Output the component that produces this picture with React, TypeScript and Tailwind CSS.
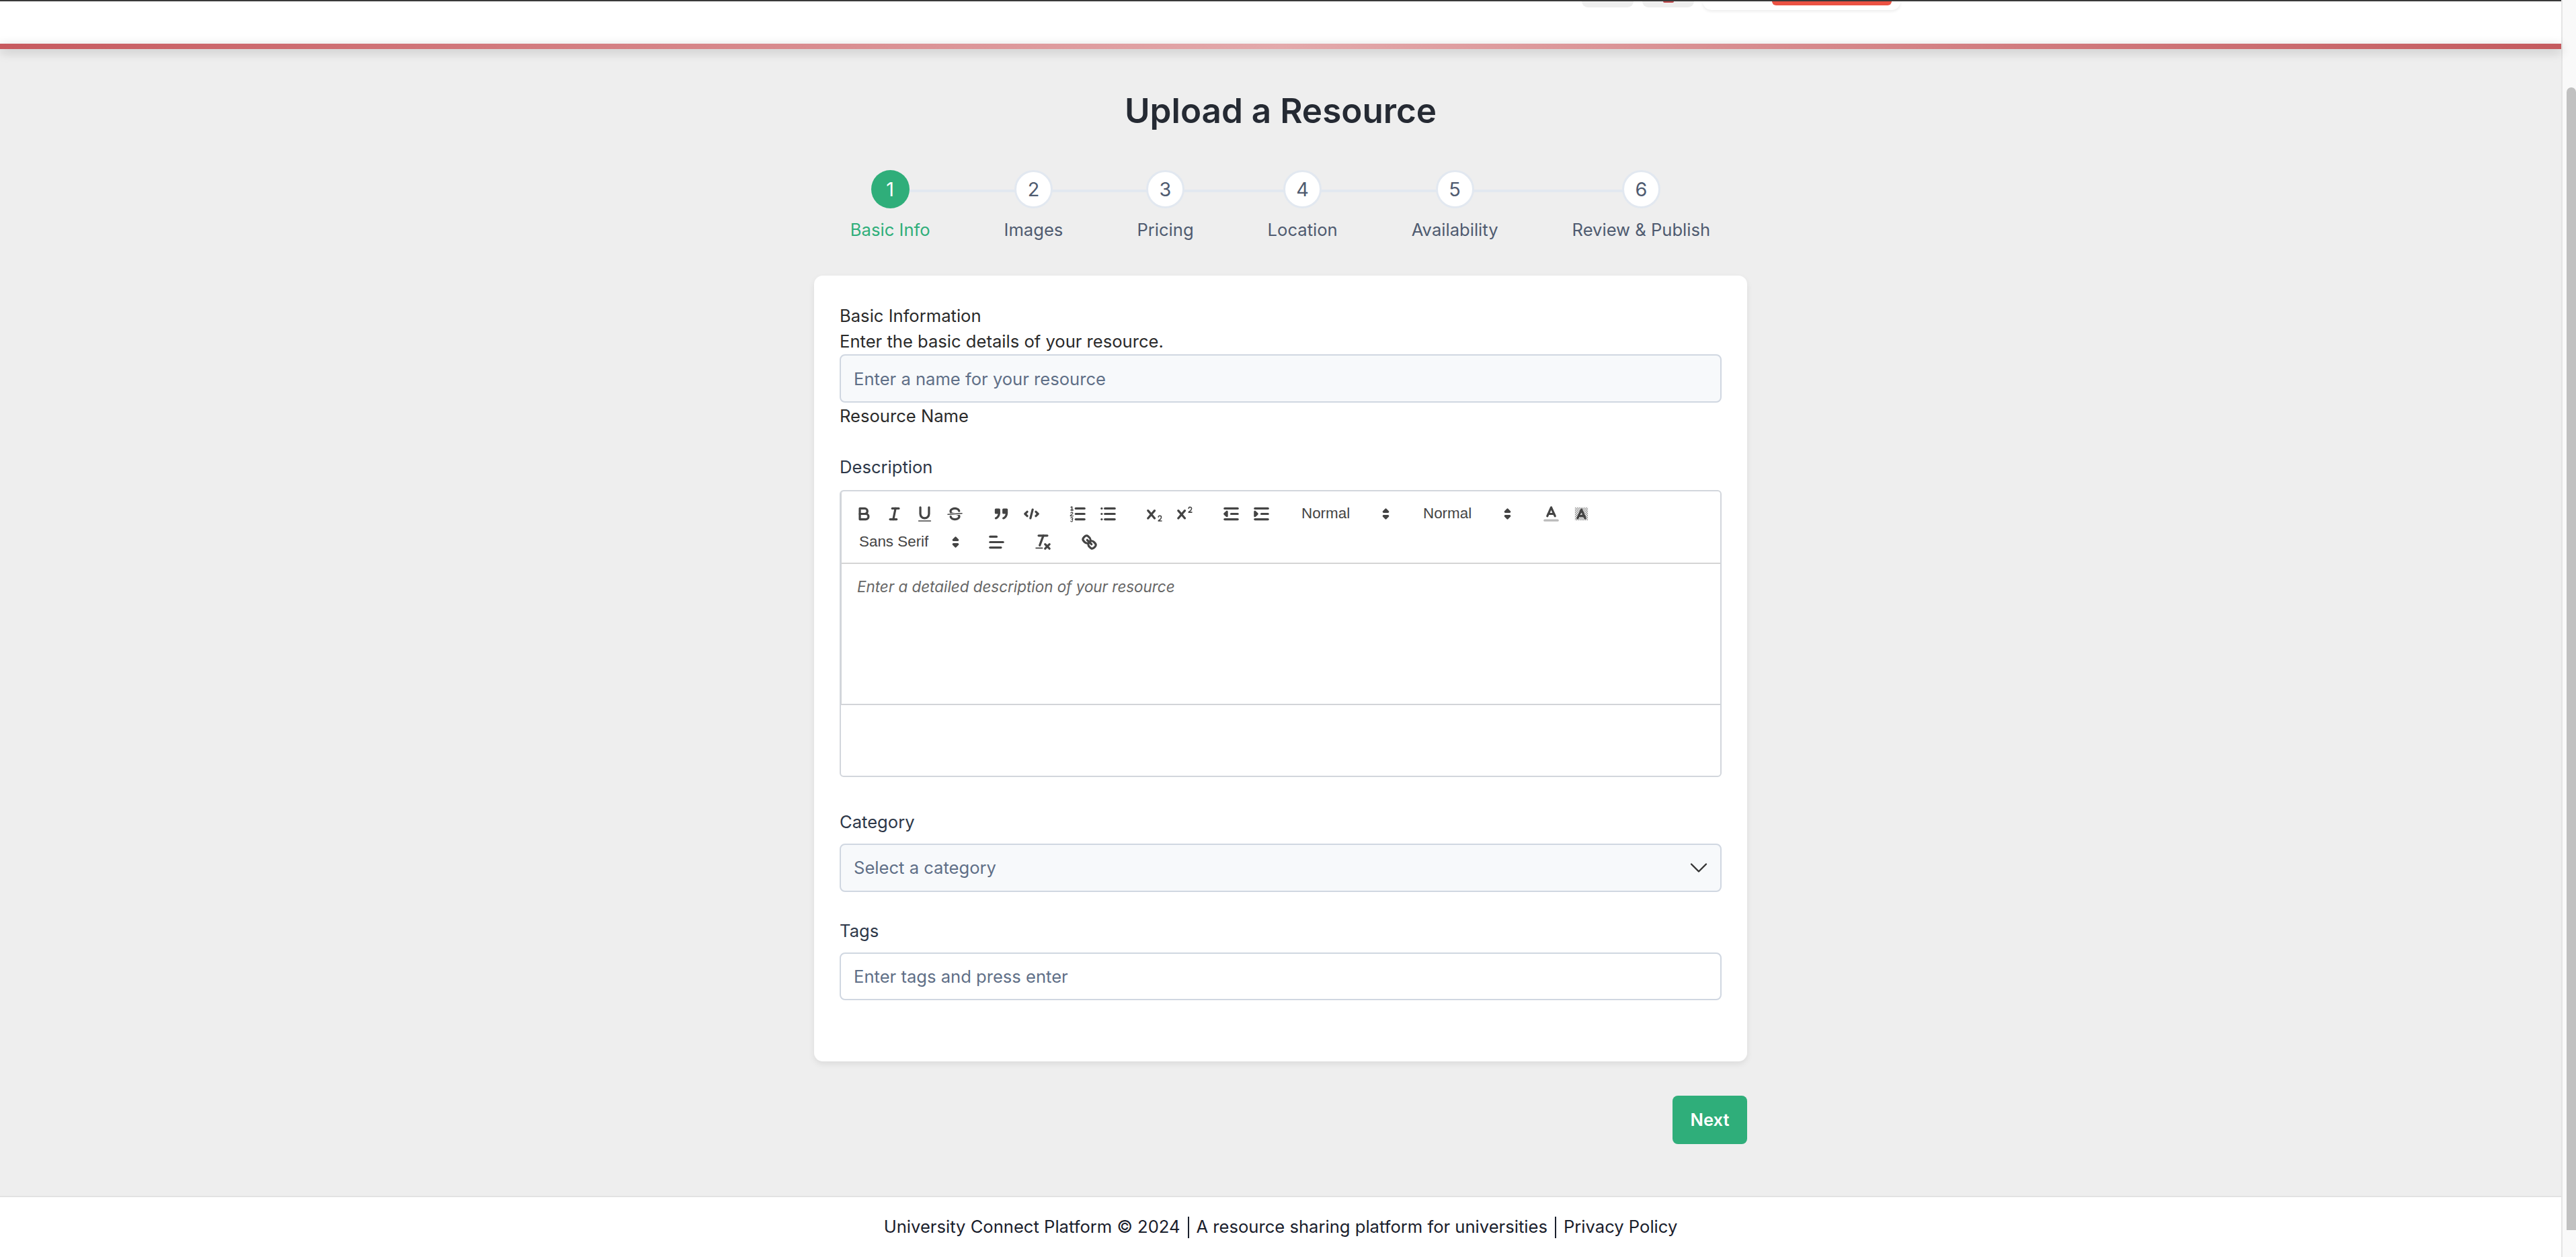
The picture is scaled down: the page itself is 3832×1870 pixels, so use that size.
import { ChevronDown } from "lucide-react";
import type { ReactNode } from "react";

const steps = ["Basic Info", "Images", "Pricing", "Location", "Availability", "Review & Publish"];

function Ico({ children }: { children: ReactNode }) {
  return (
    <span className="flex h-[38px] w-[45px] shrink-0 items-center justify-center">
      <svg
        viewBox="0 0 18 18"
        className="h-[29px] w-[29px] fill-none stroke-[#444] [stroke-linecap:round] [stroke-linejoin:round] [stroke-width:2]"
      >
        {children}
      </svg>
    </span>
  );
}

const fill = "fill-[#444] stroke-none";
const thin = "[stroke-width:1]";

function Arrows() {
  return (
    <svg viewBox="0 0 18 18" className="h-[29px] w-[29px] shrink-0 fill-[#444] stroke-[#444] [stroke-linejoin:round] [stroke-width:2]">
      <polygon points="7 11 9 13 11 11 7 11" />
      <polygon points="7 7 9 5 11 7 7 7" />
    </svg>
  );
}

function Picker({ label, width }: { label: string; width: string }) {
  return (
    <span className={`flex h-[38px] shrink-0 items-center justify-between pl-[13px] text-[22.4px] font-medium text-[#444] [font-family:'Liberation_Sans',sans-serif] ${width}`}>
      {label}
      <Arrows />
    </span>
  );
}

function Group({ children }: { children: ReactNode }) {
  return <span className="mr-[24px] flex h-[38px] items-center">{children}</span>;
}

function Toolbar() {
  return (
    <div className="flex h-[108px] flex-wrap content-start border-b-[2px] border-[#d4d4d4] pt-[14px] pr-[13px] pl-[11px] [row-gap:4px]">
      <Group>
        <Ico>
          <path d="M5,4H9.5A2.5,2.5,0,0,1,12,6.5v0A2.5,2.5,0,0,1,9.5,9H5A0,0,0,0,1,5,9V4A0,0,0,0,1,5,4Z" />
          <path d="M5,9h5.5A2.5,2.5,0,0,1,13,11.5v0A2.5,2.5,0,0,1,10.5,14H5a0,0,0,0,1,0,0V9A0,0,0,0,1,5,9Z" />
        </Ico>
        <Ico>
          <line x1="7" x2="13" y1="4" y2="4" />
          <line x1="5" x2="11" y1="14" y2="14" />
          <line x1="8" x2="10" y1="14" y2="4" />
        </Ico>
        <Ico>
          <path d="M5,3V9a4.012,4.012,0,0,0,4,4H9a4.012,4.012,0,0,0,4-4V3" />
          <rect className={fill} height="1" rx="0.5" ry="0.5" width="12" x="3" y="15" />
        </Ico>
        <Ico>
          <line className={thin} x1="15.5" x2="2.5" y1="8.5" y2="9.5" />
          <path className={fill} d="M9.007,8C6.542,7.791,6,7.519,6,6.5,6,5.792,7.283,5,9,5c1.571,0,2.765.679,2.913,1.549a1,1,0,0,0,1.972-.328C13.57,4.5,11.5,3,9,3,6.3,3,4,4.578,4,6.5a3.232,3.232,0,0,0,.55,1.858Z" />
          <path className={fill} d="M8.984,10C11.457,10.208,12,10.479,12,11.5c0,.708-1.283,1.5-3,1.5-1.571,0-2.765-.679-2.913-1.549a1,1,0,1,0-1.972.328C4.43,13.5,6.5,15,9,15c2.7,0,5-1.578,5-3.5a3.234,3.234,0,0,0-.4-1.5Z" />
        </Ico>
      </Group>
      <Group>
        <Ico>
          <rect className="fill-[#444]" height="3" width="3" x="4" y="5" />
          <rect className="fill-[#444]" height="3" width="3" x="11" y="5" />
          <path d="M7,8c0,4.031-3,5-3,5" />
          <path d="M14,8c0,4.031-3,5-3,5" />
        </Ico>
        <Ico>
          <polyline points="5 7 3 9 5 11" />
          <polyline points="13 7 15 9 13 11" />
          <line x1="10" x2="8" y1="5" y2="13" />
        </Ico>
      </Group>
      <Group>
        <Ico>
          <line x1="7" x2="15" y1="4" y2="4" />
          <line x1="7" x2="15" y1="9" y2="9" />
          <line x1="7" x2="15" y1="14" y2="14" />
          <line className={thin} x1="2.5" x2="4.5" y1="5.5" y2="5.5" />
          <path className={fill} d="M3.5,6A0.5,0.5,0,0,1,3,5.5V3.085l-0.276.138A0.5,0.5,0,0,1,2.053,3c-0.124-.247-0.023-0.324.224-0.447l1-.5A0.5,0.5,0,0,1,4,2.5v3A0.5,0.5,0,0,1,3.5,6Z" />
          <path className={fill} d="M4.5,10.5H2.75c0.2-.5,1.9-1.1,1.9-2.3A1.3,1.3,0,0,0,3.4,7,1.3,1.3,0,0,0,2.1,8.1a0.4,0.4,0,0,0,.8.1,0.5,0.5,0,0,1,.5-.4,0.5,0.5,0,0,1,.5.5c0,.8-2.3,1.5-2.3,2.6a0.5,0.5,0,0,0,.5.5H4.5a0.5,0.5,0,0,0,0-1Z" />
          <path className={fill} d="M4.1,14.3a1.2,1.2,0,0,0,.5-1,1.3,1.3,0,0,0-1.3-1.3,1.3,1.3,0,0,0-1.2,.8,0.4,0.4,0,0,0,.7,.3,0.5,0.5,0,0,1,.5-.3,0.5,0.5,0,0,1,0,1,0.4,0.4,0,0,0,0,.8,0.6,0.6,0,0,1,0,1.2,0.6,0.6,0,0,1-.6-.3,0.4,0.4,0,0,0-.7,.4,1.4,1.4,0,0,0,1.3,.7,1.4,1.4,0,0,0,.8-2.3Z" />
        </Ico>
        <Ico>
          <line x1="6" x2="15" y1="4" y2="4" />
          <line x1="6" x2="15" y1="9" y2="9" />
          <line x1="6" x2="15" y1="14" y2="14" />
          <line x1="3" x2="3" y1="4" y2="4" />
          <line x1="3" x2="3" y1="9" y2="9" />
          <line x1="3" x2="3" y1="14" y2="14" />
        </Ico>
      </Group>
      <Group>
        <Ico>
          <path className={fill} d="M15.5,15H13.861a3.858,3.858,0,0,0,1.914-2.975,1.8,1.8,0,0,0-1.6-1.751A1.921,1.921,0,0,0,12.021,11.7a0.50013,0.50013,0,1,0,.957.291h0a0.914,0.914,0,0,1,1.053-.725,0.81,0.81,0,0,1,.744.762c0,1.076-1.16971,1.86982-1.93971,2.43082A1.45639,1.45639,0,0,0,12,15.5a0.5,0.5,0,0,0,.5.5h3A0.5,0.5,0,0,0,15.5,15Z" />
          <path className={fill} d="M9.65,5.241a1,1,0,0,0-1.409.108L6,7.964,3.759,5.349A1,1,0,0,0,2.192,6.59178Q2.21541,6.6213,2.241,6.649L4.684,9.5,2.241,12.35A1,1,0,0,0,3.71,13.70722q0.02557-.02768.049-0.05722L6,11.036,8.241,13.65a1,1,0,1,0,1.567-1.24277Q9.78459,12.3777,9.759,12.35L7.316,9.5,9.759,6.651A1,1,0,0,0,9.65,5.241Z" />
        </Ico>
        <Ico>
          <path className={fill} d="M15.5,7H13.861a4.015,4.015,0,0,0,1.914-2.975,1.8,1.8,0,0,0-1.6-1.751A1.922,1.922,0,0,0,12.021,3.7a0.5,0.5,0,1,0,.957.291,0.917,0.917,0,0,1,1.053-.725,0.81,0.81,0,0,1,.744.762c0,1.077-1.164,1.925-1.934,2.486A1.423,1.423,0,0,0,12,7.5a0.5,0.5,0,0,0,.5.5h3A0.5,0.5,0,0,0,15.5,7Z" />
          <path className={fill} d="M9.651,5.241a1,1,0,0,0-1.41.108L6,7.964,3.759,5.349a1,1,0,1,0-1.519,1.3L4.683,9.5,2.241,12.35a1,1,0,1,0,1.519,1.3L6,11.036,8.241,13.65a1,1,0,0,0,1.519-1.3L7.317,9.5,9.759,6.651A1,1,0,0,0,9.651,5.241Z" />
        </Ico>
      </Group>
      <Group>
        <Ico>
          <line x1="3" x2="15" y1="14" y2="14" />
          <line x1="3" x2="15" y1="4" y2="4" />
          <line x1="9" x2="15" y1="9" y2="9" />
          <polyline className="fill-[#444]" points="5 7 5 11 3 9 5 7" />
        </Ico>
        <Ico>
          <line x1="3" x2="15" y1="14" y2="14" />
          <line x1="3" x2="15" y1="4" y2="4" />
          <line x1="9" x2="15" y1="9" y2="9" />
          <polyline className="fill-[#444]" points="3 7 3 11 5 9 3 7" />
        </Ico>
      </Group>
      <Group>
        <Picker label="Normal" width="w-[157px] pr-[4px]" />
      </Group>
      <Group>
        <Picker label="Normal" width="w-[157px] pr-[4px]" />
      </Group>
      <Group>
        <Ico>
          <line className="stroke-[#bbb]" x1="3" x2="15" y1="15" y2="15" />
          <polyline points="5.5 11 9 3 12.5 11" />
          <line x1="11.63" x2="6.38" y1="9" y2="9" />
        </Ico>
        <Ico>
          <defs>
            <pattern id="hatch" width="2" height="2" patternUnits="userSpaceOnUse">
              <rect x="0" y="0" width="1" height="1" className="fill-[#444] stroke-none" />
              <rect x="1" y="1" width="1" height="1" className="fill-[#444] stroke-none" />
            </pattern>
          </defs>
          <rect x="3" y="3" width="12" height="12" fill="url(#hatch)" className="stroke-none opacity-60" />
          <polyline points="5.5 13 9 5 12.5 13" />
          <line x1="11.63" x2="6.38" y1="11" y2="11" />
        </Ico>
      </Group>
      <Group>
        <Picker label="Sans Serif" width="w-[173px] pl-[15px]" />
      </Group>
      <Group>
        <Ico>
          <line x1="3" x2="15" y1="9" y2="9" />
          <line x1="3" x2="13" y1="14" y2="14" />
          <line x1="3" x2="9" y1="4" y2="4" />
        </Ico>
      </Group>
      <Group>
        <Ico>
          <line x1="5" x2="13" y1="3" y2="3" />
          <line x1="6" x2="9.35" y1="12" y2="3" />
          <line x1="11" x2="15" y1="11" y2="15" />
          <line x1="15" x2="11" y1="11" y2="15" />
          <rect className={fill} height="1" rx="0.5" ry="0.5" width="7" x="2" y="14" />
        </Ico>
      </Group>
      <Group>
        <Ico>
          <line x1="7" x2="11" y1="7" y2="11" />
          <path d="M8.9,4.577a3.476,3.476,0,0,1,.36,4.679A3.476,3.476,0,0,1,4.577,8.9C3.185,7.5,2.035,6.4,4.217,4.217S7.5,3.185,8.9,4.577Z" />
          <path d="M13.423,9.1a3.476,3.476,0,0,0-4.679-.36,3.476,3.476,0,0,0,.36,4.679c1.392,1.392,2.5,2.542,4.679.36S14.815,10.5,13.423,9.1Z" />
        </Ico>
      </Group>
    </div>
  );
}

export default function App() {
  return (
    <div className="flex h-[1870px] w-full overflow-hidden bg-[#eeeeee] text-[25.6px] font-[Inter,sans-serif] text-[#1a202c]">
      <div className="flex min-w-0 flex-1 flex-col border-r-[2px] border-[#e4e4e4]">
        <header className="relative z-10 h-[73px] shrink-0 border-t-[2px] border-[#3a3a3a] bg-white">
          <div className="flex h-[63px] items-start gap-[13px] pl-[2353px]">
            <div className="h-[9px] w-[77px] rounded-b-[12px] bg-[#eeeeee]" />
            <div className="flex h-[9px] w-[77px] justify-center rounded-b-[12px] bg-[#eeeeee]">
              <div className="h-[2px] w-[16px] rounded-b-full bg-[#c0474a]" />
            </div>
            <div className="flex h-[13px] w-[294px] justify-end rounded-b-[16px] bg-white pr-[13px] shadow-[0_2px_4px_rgba(0,0,0,0.08)]">
              <div className="h-[6px] w-[178px] rounded-b-[8px] bg-[#eb5243]" />
            </div>
          </div>
          <div className="h-[8px] bg-[linear-gradient(90deg,#c75a5f_0%,#e3a9ab_50%,#c45a5e_100%)] shadow-[0_4px_16px_rgba(0,0,0,0.22)]" />
        </header>

        <main className="flex flex-1 flex-col items-center pt-[58px]">
          <h1 className="text-[51.2px] leading-[66px] font-semibold text-[#252a33]">Upload a Resource</h1>

          <div className="relative mt-[56px] flex gap-[110px] pr-[1px]">
            <div className="absolute top-[29px] right-[104px] left-[60px] h-[4px] bg-[#e2e8f0]" />
            {steps.map((s, i) => (
              <div key={s} className="relative flex flex-col items-center">
                <div
                  className={
                    i === 0
                      ? "flex h-[57px] w-[57px] items-center justify-center rounded-full bg-[#2fae7a] text-[28.8px] text-white"
                      : "flex h-[57px] w-[57px] items-center justify-center rounded-full border-[3px] border-[#e2e8f0] bg-white text-[28.8px] text-[#4f5b70]"
                  }
                >
                  {i + 1}
                </div>
                <div className={i === 0 ? "mt-[16px] leading-[32px] text-[#2fae7a]" : "mt-[16px] leading-[32px] text-[#4f5b70]"}>
                  {s}
                </div>
              </div>
            ))}
          </div>

          <section className="mt-[52px] w-[1388px] rounded-[13px] bg-white px-[38px] pt-[41px] pb-[91px] shadow-[0_4px_10px_rgba(0,0,0,0.08)]">
            <div className="leading-[38px] text-[#2a2a2a]">Basic Information</div>
            <div className="leading-[38px] text-[#2a2a2a]">Enter the basic details of your resource.</div>
            <input
              readOnly
              placeholder="Enter a name for your resource"
              className="h-[72px] w-full rounded-[8px] border-[2px] border-[#d0d7e1] bg-[#f7f9fb] px-[19px] outline-none placeholder:text-[#5f6f87]"
            />
            <div className="mt-[1px] leading-[38px] text-[#2a2a2a]">Resource Name</div>

            <div className="mt-[38px] leading-[38px] text-[#2d3748]">Description</div>
            <div className="mt-[15px] h-[427px] rounded-[6px] border-[2px] border-[#d2d6dc]">
              <div className="h-[318px] rounded-t-[4px] border-b-[2px] border-l-[1px] border-[#d2d4d8]">
                <Toolbar />
                <div className="px-[23px] pt-[18px] text-[22.4px] leading-[32px] text-[#666] italic">
                  Enter a detailed description of your resource
                </div>
              </div>
            </div>

            <div className="mt-[48px] leading-[38px] text-[#2d3748]">Category</div>
            <div className="mt-[13px] flex h-[72px] items-center justify-between rounded-[8px] border-[2px] border-[#d0d7e1] bg-[#f7f9fb] pr-[10px] pl-[19px] text-[#5f6f87]">
              Select a category
              <ChevronDown className="h-[44px] w-[44px] text-[#333]" strokeWidth={1.3} />
            </div>

            <div className="mt-[39px] leading-[38px] text-[#2d3748]">Tags</div>
            <input
              readOnly
              placeholder="Enter tags and press enter"
              className="mt-[13px] h-[71px] w-full rounded-[8px] border-[2px] border-[#d0d7e1] bg-white px-[19px] outline-none placeholder:text-[#5f6f87]"
            />
          </section>

          <div className="mt-[51px] flex w-[1388px] justify-end">
            <button className="h-[72px] w-[111px] rounded-[8px] bg-[#2fae7a] font-semibold text-white">Next</button>
          </div>
        </main>

        <footer className="flex h-[91px] shrink-0 items-center justify-center border-t-[2px] border-[#e2e2e2] bg-white text-[#1a202c]">
          <span>University Connect Platform © 2024</span>
          <span className="mx-[11px] h-[32px] w-[2px] bg-[#1a202c]" />
          <span>A resource sharing platform for universities</span>
          <span className="mx-[11px] h-[32px] w-[2px] bg-[#1a202c]" />
          <span>Privacy Policy</span>
        </footer>
      </div>

      <aside className="w-[20px] shrink-0 bg-[#f9f9f9] pt-[130px] pl-[6px]">
        <div className="h-[1700px] w-[14px] rounded-t-[7px] bg-[#c1c1c1]" />
      </aside>
    </div>
  );
}
